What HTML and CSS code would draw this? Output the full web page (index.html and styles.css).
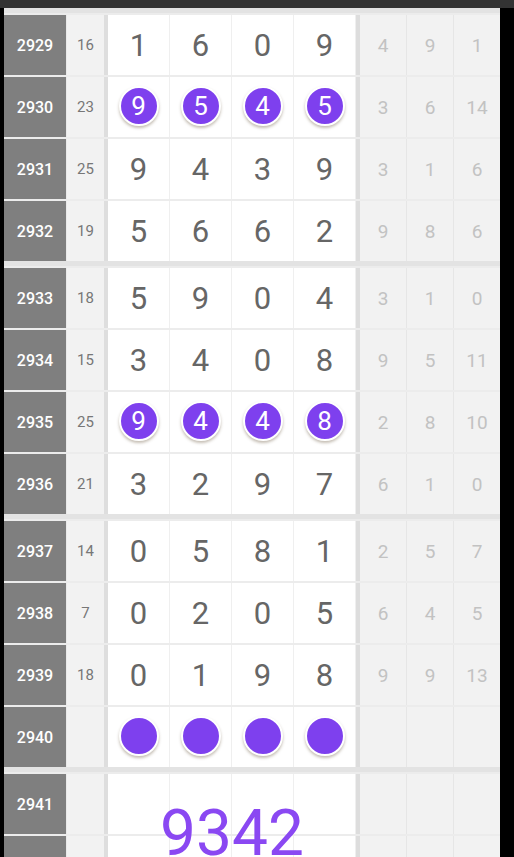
FILE: index.html
```html
<!DOCTYPE html>
<html>
<head>
<meta charset="utf-8">
<link rel="stylesheet" href="styles.css">
</head>
<body>
<div class="topbar"></div>
<div class="sheet">
  <div class="group">
    <div class="row"><div class="no">2929</div><div class="sum">16</div><div class="digits"><div class="d">1</div><div class="d">6</div><div class="d">0</div><div class="d">9</div></div><div class="stats"><div class="s">4</div><div class="s">9</div><div class="s">1</div></div></div>
    <div class="row"><div class="no">2930</div><div class="sum">23</div><div class="digits"><div class="d"><span class="ball">9</span></div><div class="d"><span class="ball">5</span></div><div class="d"><span class="ball">4</span></div><div class="d"><span class="ball">5</span></div></div><div class="stats"><div class="s">3</div><div class="s">6</div><div class="s">14</div></div></div>
    <div class="row"><div class="no">2931</div><div class="sum">25</div><div class="digits"><div class="d">9</div><div class="d">4</div><div class="d">3</div><div class="d">9</div></div><div class="stats"><div class="s">3</div><div class="s">1</div><div class="s">6</div></div></div>
    <div class="row"><div class="no">2932</div><div class="sum">19</div><div class="digits"><div class="d">5</div><div class="d">6</div><div class="d">6</div><div class="d">2</div></div><div class="stats"><div class="s">9</div><div class="s">8</div><div class="s">6</div></div></div>
  </div>
  <div class="group">
    <div class="row"><div class="no">2933</div><div class="sum">18</div><div class="digits"><div class="d">5</div><div class="d">9</div><div class="d">0</div><div class="d">4</div></div><div class="stats"><div class="s">3</div><div class="s">1</div><div class="s">0</div></div></div>
    <div class="row"><div class="no">2934</div><div class="sum">15</div><div class="digits"><div class="d">3</div><div class="d">4</div><div class="d">0</div><div class="d">8</div></div><div class="stats"><div class="s">9</div><div class="s">5</div><div class="s">11</div></div></div>
    <div class="row"><div class="no">2935</div><div class="sum">25</div><div class="digits"><div class="d"><span class="ball">9</span></div><div class="d"><span class="ball">4</span></div><div class="d"><span class="ball">4</span></div><div class="d"><span class="ball">8</span></div></div><div class="stats"><div class="s">2</div><div class="s">8</div><div class="s">10</div></div></div>
    <div class="row"><div class="no">2936</div><div class="sum">21</div><div class="digits"><div class="d">3</div><div class="d">2</div><div class="d">9</div><div class="d">7</div></div><div class="stats"><div class="s">6</div><div class="s">1</div><div class="s">0</div></div></div>
  </div>
  <div class="group">
    <div class="row"><div class="no">2937</div><div class="sum">14</div><div class="digits"><div class="d">0</div><div class="d">5</div><div class="d">8</div><div class="d">1</div></div><div class="stats"><div class="s">2</div><div class="s">5</div><div class="s">7</div></div></div>
    <div class="row"><div class="no">2938</div><div class="sum">7</div><div class="digits"><div class="d">0</div><div class="d">2</div><div class="d">0</div><div class="d">5</div></div><div class="stats"><div class="s">6</div><div class="s">4</div><div class="s">5</div></div></div>
    <div class="row"><div class="no">2939</div><div class="sum">18</div><div class="digits"><div class="d">0</div><div class="d">1</div><div class="d">9</div><div class="d">8</div></div><div class="stats"><div class="s">9</div><div class="s">9</div><div class="s">13</div></div></div>
    <div class="row"><div class="no">2940</div><div class="sum"></div><div class="digits"><div class="d"><span class="ball"></span></div><div class="d"><span class="ball"></span></div><div class="d"><span class="ball"></span></div><div class="d"><span class="ball"></span></div></div><div class="stats"><div class="s"></div><div class="s"></div><div class="s"></div></div></div>
  </div>
  <div class="group">
    <div class="row"><div class="no">2941</div><div class="sum"></div><div class="digits pred"><div class="d"></div><div class="d"></div><div class="d"></div><div class="d"></div><div class="big">9342</div></div><div class="stats"><div class="s"></div><div class="s"></div><div class="s"></div></div></div>
    <div class="row"><div class="no"></div><div class="sum"></div><div class="digits"><div class="d"></div><div class="d"></div><div class="d"></div><div class="d"></div></div><div class="stats"><div class="s"></div><div class="s"></div><div class="s"></div></div></div>
  </div>
</div>
</body>
</html>
```

FILE: styles.css
```css
html, body {
  margin: 0;
  padding: 0;
  background: #000;
  height: 857px;
  overflow: hidden;
  font-family: Roboto, "Liberation Sans", sans-serif;
}
.topbar {
  height: 8px;
  background: #333333;
}
.sheet {
  margin-left: 4px;
  width: 496px;
  background: #f1f1f1;
}
.group {
  border-top: 5px solid #e3e3e3;
}
.row {
  display: flex;
  height: 60px;
  border-top: 2px solid #ececec;
}
.no {
  width: 62px;
  background: #7f7f7f;
  color: #fff;
  font-size: 16px;
  font-weight: 500;
  display: flex;
  align-items: center;
  justify-content: center;
}
.sum {
  width: 37px;
  border-left: 1px solid #e9e9e9;
  border-right: 4px solid #dedede;
  background: #f2f2f2;
  color: #777;
  font-size: 15px;
  display: flex;
  align-items: center;
  justify-content: center;
}
.digits {
  display: flex;
  background: #fff;
  position: relative;
}
.d {
  width: 61px;
  border-right: 1px solid #efefef;
  display: flex;
  align-items: center;
  justify-content: center;
  color: #666;
  font-size: 31px;
}
.stats {
  display: flex;
  border-left: 4px solid #dddddd;
  background: #f2f2f2;
  flex: 1;
}
.s {
  flex: 1;
  border-right: 1px solid #e6e6e6;
  display: flex;
  align-items: center;
  justify-content: center;
  color: #c2c2c2;
  font-size: 19px;
}
.s:last-child {
  border-right: none;
}
.ball {
  width: 36px;
  height: 36px;
  border-radius: 50%;
  background: #7e40ee;
  border: 2px solid #fff;
  box-shadow: 0 2px 3px rgba(90, 70, 40, 0.35);
  color: #fff;
  font-size: 26px;
  font-weight: 400;
  display: flex;
  align-items: center;
  justify-content: center;
  margin-top: -2px;
}
.big {
  position: absolute;
  left: 0;
  right: 0;
  top: 28px;
  z-index: 2;
  text-align: center;
  color: #8a48f2;
  font-size: 64px;
  line-height: 64px;
}
```
